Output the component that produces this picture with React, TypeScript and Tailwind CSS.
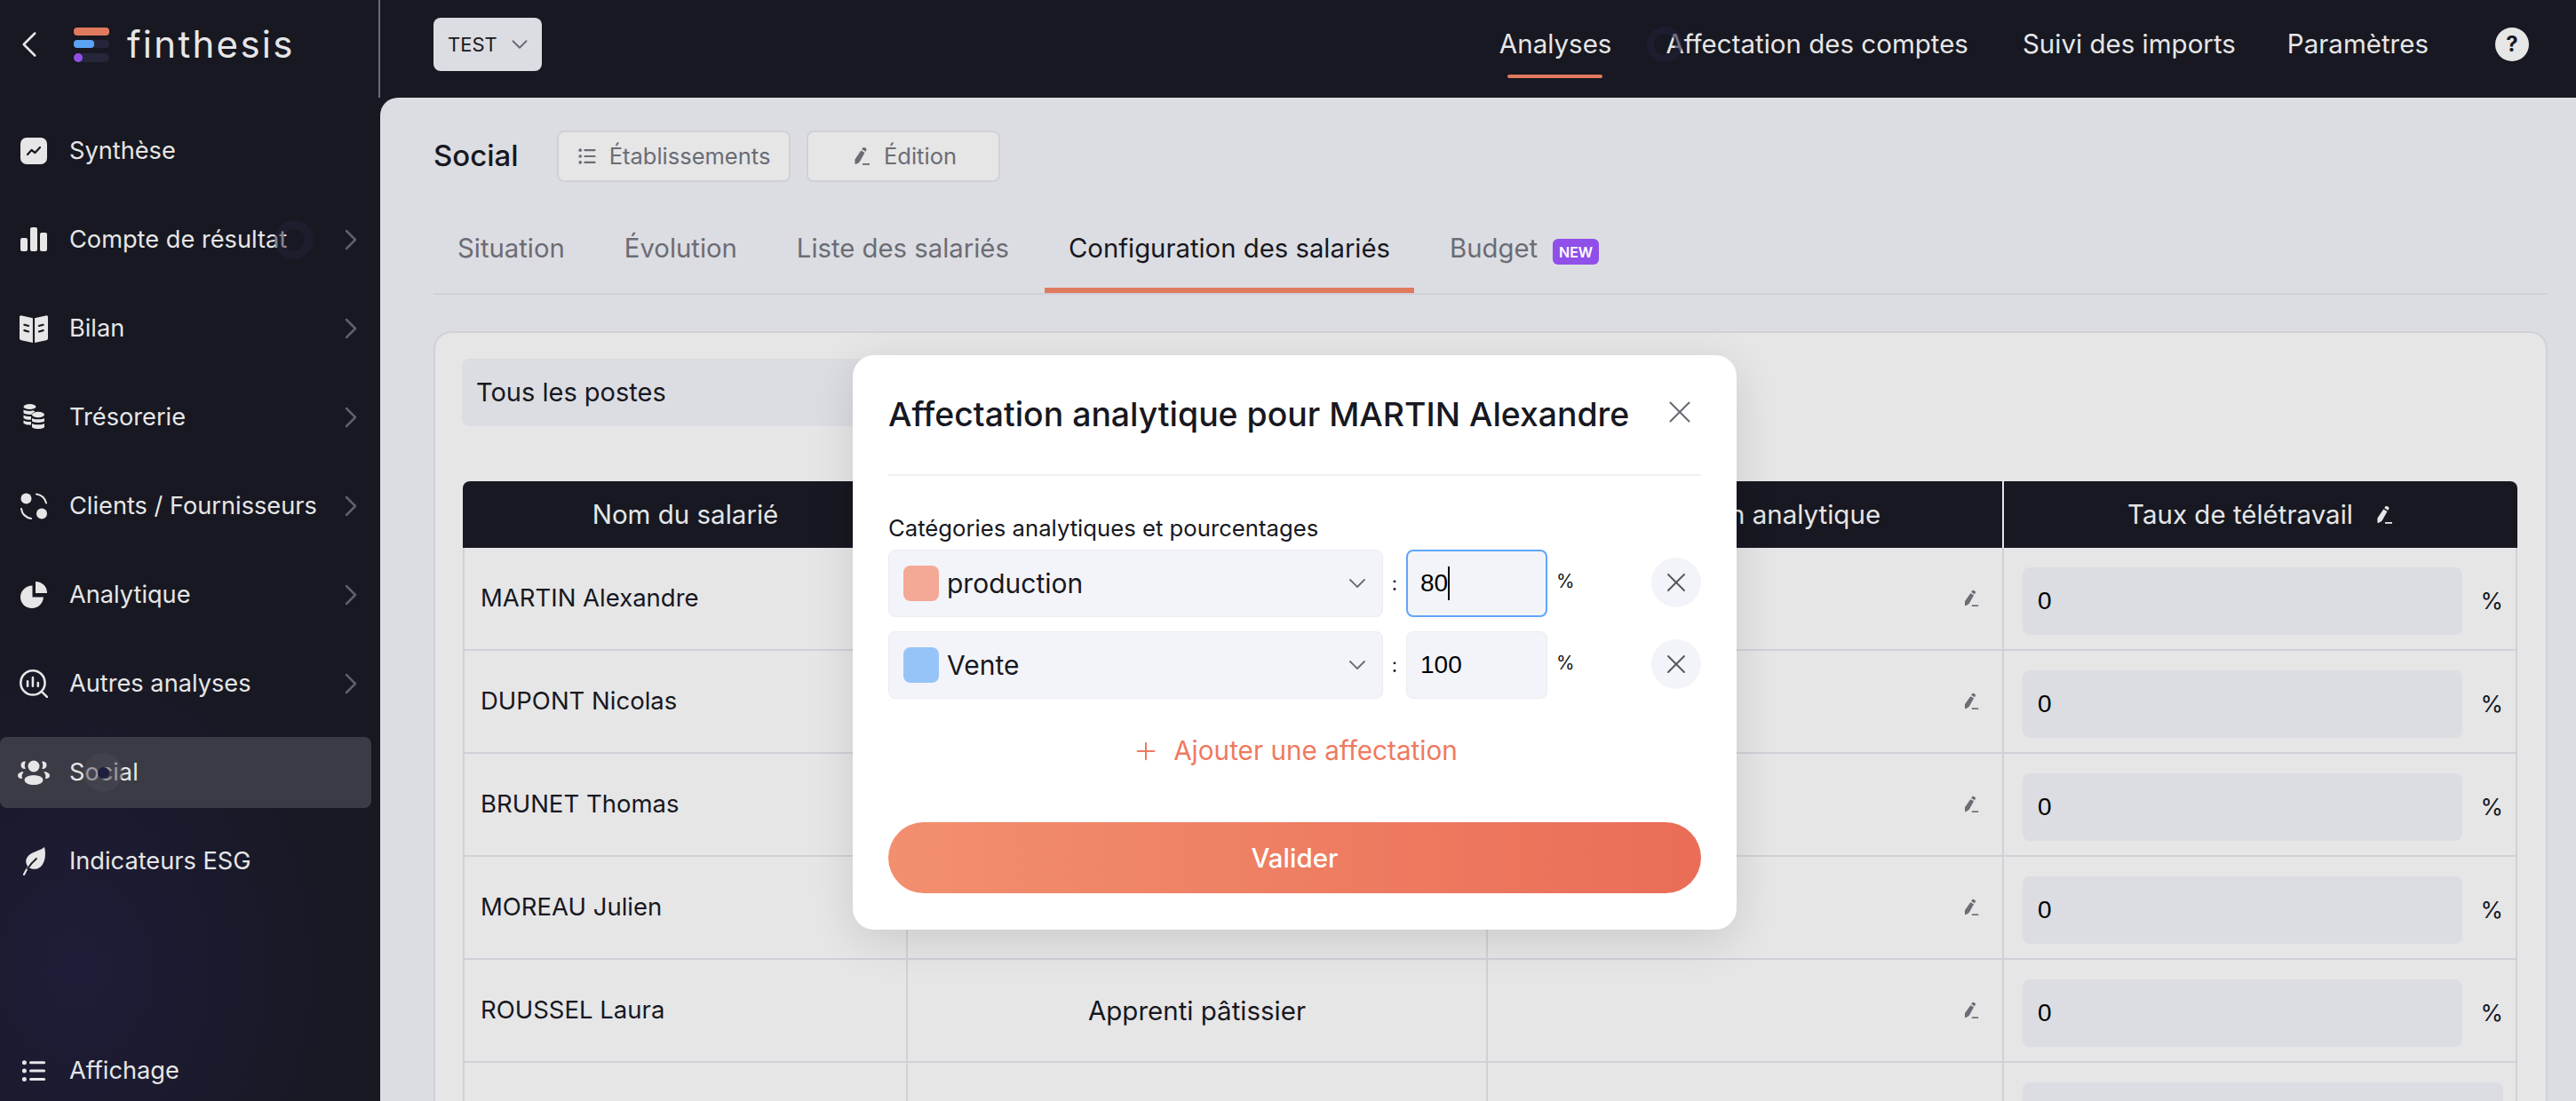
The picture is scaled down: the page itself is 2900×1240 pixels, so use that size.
import { ChevronDown, ChevronLeft, ChevronRight, Plus, X } from "lucide-react";

function Pen({ className }: { className?: string }) {
  return (
    <svg viewBox="0 0 24 24" className={className} fill="currentColor">
      <path d="M14.2 2.6c.5-.7 1.4-.9 2.1-.5l1.5.9c.7.4 1 1.3.6 2l-.9 1.7-4.2-2.4 .9-1.7zM12.3 5.6l4.2 2.4-5.6 10c-.3.5-.7.9-1.2 1.2l-3.1 1.7c-.5.3-1.1-.1-1.1-.6l-.1-3.6c0-.6.1-1.2.4-1.7l6.5-9.4z" />
      <rect x="14" y="20" width="8" height="1.8" />
    </svg>
  );
}

function ListIcon({ className }: { className?: string }) {
  return (
    <svg viewBox="0 0 24 24" className={className} fill="currentColor">
      <circle cx="3.5" cy="4.5" r="2" />
      <circle cx="3.5" cy="12" r="2" />
      <circle cx="3.5" cy="19.5" r="2" />
      <rect x="8" y="3.3" width="14.5" height="2.4" rx="1.2" />
      <rect x="8" y="10.8" width="14.5" height="2.4" rx="1.2" />
      <rect x="8" y="18.3" width="14.5" height="2.4" rx="1.2" />
    </svg>
  );
}

function SyntheseIcon() {
  return (
    <svg viewBox="0 0 30 30" className="w-[30px] h-[30px]">
      <rect x="0" y="0" width="30" height="30" rx="7" fill="#e6e6e7" />
      <path d="M8 19l4.5-5 4 3 5.5-6" fill="none" stroke="#171821" strokeWidth="2.2" strokeLinecap="round" strokeLinejoin="round" />
    </svg>
  );
}

function BarsIcon() {
  return (
    <svg viewBox="0 0 30 30" className="w-[30px] h-[30px]" fill="#e6e6e7">
      <rect x="0" y="13" width="8" height="15" rx="2" />
      <rect x="11" y="1" width="8" height="27" rx="2" />
      <rect x="22" y="7" width="8" height="21" rx="2" />
    </svg>
  );
}

function BookIcon() {
  return (
    <svg viewBox="0 0 30 30" className="w-[32px] h-[32px]">
      <path d="M0 3c0-1.300 1-2 2.300-1.700L14 4v26L2 27.500c-1.200-.3-2-1.200-2-2.400V3zM30 3c0-1.300-1-2-2.300-1.700L16 4v26l12-2.500c1.200-.3 2-1.200 2-2.400V3z" fill="#e6e6e7" />
      <path d="M5 11l4.500 1.200M5 17l4.500 1.200M25 11l-4.500 1.200M25 17l-4.500 1.200" stroke="#171821" strokeWidth="2" strokeLinecap="round" />
    </svg>
  );
}

function CoinsIcon() {
  return (
    <svg viewBox="0 0 24 30" className="w-[24px] h-[30px]" fill="#e6e6e7">
      <ellipse cx="7.500" cy="3" rx="7" ry="3" />
      <path d="M.5 6.500c1.800 1.500 8 2 11 .8l2 1.200c-2 .8-3.500 2-3.700 3.300-3 .3-7.500-.2-9.300-1.600V6.500zM.5 12.500c1.800 1.200 5.500 1.700 8.500 1.500v3.700c-3 .2-6.700-.4-8.500-1.800v-3.400zM.5 18.500c1.800 1.200 5.500 1.700 8.500 1.500v3.500c-3 .2-6.700-.4-8.500-1.800v-3.200z" />
      <ellipse cx="17" cy="12" rx="7" ry="3.200" />
      <path d="M10 16c1.800 1.700 12.200 1.700 14 0v3.500c-1.800 1.900-12.200 1.900-14 0V16zM10 22c1.800 1.700 12.200 1.700 14 0v4c-1.800 2.700-12.200 2.700-14 0v-4z" />
    </svg>
  );
}

function ClientsIcon() {
  return (
    <svg viewBox="0 0 30 30" className="w-[30px] h-[30px]">
      <circle cx="6.500" cy="6.500" r="6" fill="#e6e6e7" />
      <circle cx="24" cy="23.500" r="6" fill="#e6e6e7" />
      <path d="M18 1.500c5.500 .8 9.700 4.800 11 10M1 18c.8 5.500 5 9.800 11 11" fill="none" stroke="#e6e6e7" strokeWidth="2" strokeLinecap="round" />
    </svg>
  );
}

function PieIcon() {
  return (
    <svg viewBox="0 0 30 30" className="w-[30px] h-[30px]" fill="#e6e6e7">
      <path d="M13.500 4.500C6 4.500 0 10.500 0 17.500 0 24.500 5.800 30 13 30c7 0 12.500-5.500 13-12.500H13.500V4.500z" />
      <path d="M17 0c7.500 0 13 5.500 13 13H17V0z" />
    </svg>
  );
}

function SearchChartIcon() {
  return (
    <svg viewBox="0 0 30 30" className="w-[32px] h-[32px]" fill="none" stroke="#e6e6e7">
      <circle cx="14" cy="14" r="12.800" strokeWidth="2.400" />
      <path d="M24 24l5 5" strokeWidth="2.400" strokeLinecap="round" />
      <path d="M8.500 12.500v5M14 8.500v9M19.500 14v3.500" strokeWidth="2.400" strokeLinecap="round" />
    </svg>
  );
}

function UsersIcon() {
  return (
    <svg viewBox="0 0 36 28" className="w-[36px] h-[28px]" fill="#e6e6e7">
      <circle cx="18" cy="7" r="6.500" />
      <ellipse cx="18" cy="22.500" rx="10.500" ry="5.500" />
      <path d="M8 1.500c-3 0-4.500 2-4.500 4.200S5 10 8 10c.5 0 .8-.6.500-1C7.500 7.500 7.500 4 8.700 2.600c.3-.4 0-1.100-.7-1.100zM28 1.500c3 0 4.500 2 4.500 4.200S31 10 28 10c-.5 0-.8-.6-.5-1 1-1.500 1-5-.2-6.400-.3-.4 0-1.100 .7-1.100z" />
      <path d="M5.500 13c-3.500 .5-5.500 2.500-5.500 4.500S2 21 4.500 21c.5 0 .7-.5 .5-.9-.8-1.500-.5-3.800 1.200-5.800.4-.5 0-1.400-.7-1.300zM30.500 13c3.500 .5 5.500 2.500 5.500 4.500S34 21 31.500 21c-.5 0-.7-.5-.5-.9 .8-1.500 .5-3.800-1.200-5.800-.4-.5 0-1.400 .7-1.300z" />
    </svg>
  );
}

function LeafIcon() {
  return (
    <svg viewBox="0 0 30 32" className="w-[30px] h-[32px]">
      <path d="M27 0c2 8 1 17-4 22-4 3.500-9 3.500-13 1.500C6 20 5 15 8 11c4-6 13-6 19-11z" fill="#e6e6e7" />
      <path d="M4 31C7 24 11 19 18 13" fill="none" stroke="#e6e6e7" strokeWidth="2.200" strokeLinecap="round" />
      <path d="M8 24.500C11 19.500 14 16.500 18 13" fill="none" stroke="#171821" strokeWidth="1.800" strokeLinecap="round" />
    </svg>
  );
}

function Logo() {
  return (
    <svg viewBox="0 0 40 40" className="w-[40px] h-[40px]">
      <rect x="0" y="1" width="40" height="9" rx="4" fill="#e07a5f" />
      <rect x="0" y="15" width="40" height="9" rx="4" fill="#25263a" />
      <rect x="0" y="15" width="23" height="9" rx="4" fill="#5ba4f5" />
      <rect x="0" y="30" width="40" height="10" rx="5" fill="#25263a" />
      <rect x="0" y="30" width="10" height="10" rx="5" fill="#8f4fe8" />
    </svg>
  );
}

const menu = [
  { label: "Synthèse", icon: <SyntheseIcon /> },
  { label: "Compte de résultat", icon: <BarsIcon />, arrow: true },
  { label: "Bilan", icon: <BookIcon />, arrow: true },
  { label: "Trésorerie", icon: <CoinsIcon />, arrow: true },
  { label: "Clients / Fournisseurs", icon: <ClientsIcon />, arrow: true },
  { label: "Analytique", icon: <PieIcon />, arrow: true },
  { label: "Autres analyses", icon: <SearchChartIcon />, arrow: true },
  { label: "Social", icon: <UsersIcon />, active: true },
  { label: "Indicateurs ESG", icon: <LeafIcon /> },
];

const employees = [
  { name: "MARTIN Alexandre", job: "" },
  { name: "DUPONT Nicolas", job: "" },
  { name: "BRUNET Thomas", job: "" },
  { name: "MOREAU Julien", job: "" },
  { name: "ROUSSEL Laura", job: "Apprenti pâtissier" },
  { name: "", job: "" },
];

const assignments = [
  { label: "production", color: "bg-[#f4a896]", value: "80", focused: true },
  { label: "Vente", color: "bg-[#97c4f8]", value: "100", focused: false },
];

function Sidebar() {
  return (
    <aside className="relative w-[428px] shrink-0 h-full flex flex-col bg-[radial-gradient(ellipse_340px_420px_at_20%_88%,#1e1c38,#171821)] text-[#e6e6e7]">
      <div className="h-[110px] shrink-0 flex items-center pl-[8px] pb-[10px]">
        <ChevronLeft className="w-[50px] h-[50px] text-[#e6e6e7]" strokeWidth={1.2} />
        <div className="ml-[25px]">
          <Logo />
        </div>
        <span className="ml-[20px] text-[42px] leading-none tracking-[2.300px]">finthesis</span>
      </div>
      <nav className="flex flex-col pt-[20px]">
        {menu.map((item) => (
          <div
            key={item.label}
            className={
              item.active
                ? "relative h-[80px] mb-[20px] w-[418px] flex items-center pr-[3px] rounded-[8px] bg-[#3b3b45]"
                : "relative h-[80px] mb-[20px] w-[418px] flex items-center pr-[3px]"
            }
          >
            <span className="w-[78px] shrink-0 flex justify-center pr-[2px]">{item.icon}</span>
            <span className="text-[27.200px] leading-none">{item.label}</span>
            {item.arrow && <ChevronRight className="ml-auto w-[40px] h-[40px] text-[#5f606b]" strokeWidth={1.5} />}
          </div>
        ))}
      </nav>
      <div className="mt-auto h-[68px] flex items-center">
        <span className="w-[78px] shrink-0 flex justify-center pr-[2px]">
          <ListIcon className="w-[30px] h-[30px]" />
        </span>
        <span className="text-[27.200px] leading-none">Affichage</span>
      </div>
      <span className="absolute left-[309px] top-[248px] w-[44px] h-[44px] rounded-full border-[10px] border-[#21223a]/50" />
      <span className="absolute left-[94px] top-[848px] w-[44px] h-[44px] rounded-full bg-[#4a4a56]/50 flex items-center justify-center">
        <span className="w-[13px] h-[13px] rounded-full bg-[#1e1e3f]" />
      </span>
    </aside>
  );
}

function TopBar() {
  return (
    <header className="relative h-[110px] shrink-0 flex items-center border-l-2 border-[#6b6c75] bg-[#171821] pl-[60px] pb-[10px] -ml-[2px]">
      <div className="w-[122px] h-[60px] rounded-[8px] bg-[#dcdde2] flex items-center pl-[16px] text-[#171821]">
        <span className="text-[22px] leading-none">TEST</span>
        <ChevronDown className="ml-[10px] w-[30px] h-[30px] text-[#6b6c75]" strokeWidth={1.5} />
      </div>
      <nav className="ml-auto flex items-center text-[#e6e6e7] text-[29.500px] leading-none pr-[53px]">
        <span className="relative mr-[61px]">
          Analyses
          <span className="absolute left-[9px] right-[10px] top-[49px] h-[4px] rounded-[2px] bg-[#e07a5f]" />
        </span>
        <span className="mr-[61px]">Affectation des comptes</span>
        <span className="mr-[58px]">Suivi des imports</span>
        <span className="mr-[75px]">Paramètres</span>
        <span className="w-[38px] h-[38px] rounded-full bg-[#e6e6e7] flex items-center justify-center text-[#171821] text-[24px] font-bold">?</span>
      </nav>
      <span className="absolute left-[1426px] top-[30px] w-[40px] h-[40px] rounded-full border-[8px] border-[#21223a]/60" />
    </header>
  );
}

function Tabs() {
  const tabs = ["Situation", "Évolution", "Liste des salariés", "Configuration des salariés"];
  return (
    <div className="mt-[40px] flex gap-[13px] h-[87px] border-b-2 border-[#d0d1d8] text-[29.300px] leading-none">
      {tabs.map((tab, i) => (
        <div
          key={tab}
          className={
            i === 3
              ? "px-[27px] pt-[20px] border-b-[6px] border-[#e07a5f] text-[#171821] h-[85px]"
              : "px-[27px] pt-[20px] text-[#6b6c75]"
          }
        >
          {tab}
        </div>
      ))}
      <div className="px-[27px] pt-[20px] text-[#6b6c75] flex items-start">
        Budget
        <span className="ml-[17px] mt-[4px] w-[52px] h-[29px] rounded-[6px] bg-[#8f4fe8] text-white text-[16px] font-semibold flex items-center justify-center">NEW</span>
      </div>
    </div>
  );
}

function Table() {
  return (
    <div className="mt-[62px] ml-[1px] w-[2313px] rounded-t-[8px] overflow-hidden">
      <div className="grid grid-cols-[501px_653px_581px_578px] h-[75px] bg-[#171821] text-[#e6e6e7] text-[29.500px] items-center text-center">
        <div className="h-full flex items-center justify-center">Nom du salarié</div>
        <div className="h-full" />
        <div className="h-full flex items-center justify-center border-r-2 border-[#e6e6e7]">Affectation analytique</div>
        <div className="h-full flex items-center justify-center gap-[22px]">
          Taux de télétravail
          <Pen className="w-[24px] h-[24px]" />
        </div>
      </div>
      {employees.map((e, i) => (
        <div
          key={i}
          className="grid grid-cols-[499px_653px_581px_576px] h-[116px] border-b-2 border-l-2 border-r-2 border-[#d0d1d8] text-[#171821] text-[27.500px]"
        >
          <div className="flex items-center pl-[18px] border-r-2 border-[#d0d1d8]">{e.name}</div>
          <div className="flex items-center justify-center border-r-2 border-[#d0d1d8] text-[29.500px]">{e.job}</div>
          <div className="flex items-center justify-end pr-[25px] border-r-2 border-[#d0d1d8]">
            {e.name && <Pen className="w-[22px] h-[22px] text-[#6b6c75]" />}
          </div>
          <div className="flex items-start pt-[22px] pl-[21px] pr-[14px]">
            <div className="flex-1 h-[76px] rounded-[8px] bg-[#dcdde2] flex items-center pl-[17px] font-['Liberation_Sans',sans-serif] text-[28px] text-black">{e.name ? "0" : ""}</div>
            {e.name && <span className="ml-[20px] mt-[18px] text-[26px]">%</span>}
          </div>
        </div>
      ))}
    </div>
  );
}

function Modal() {
  return (
    <div className="absolute left-[960px] top-[400px] w-[995px] h-[647px] rounded-[24px] bg-white px-[40px] shadow-[0_12px_50px_rgba(0,0,0,0.12)] text-[#171821]">
      <div className="h-[136px] flex items-start border-b-2 border-[#eeeff4]">
        <h2 className="mt-[48px] text-[37.400px] leading-none font-medium whitespace-nowrap">Affectation analytique pour MARTIN Alexandre</h2>
        <X className="ml-auto mr-[3px] mt-[43px] w-[42px] h-[42px] text-[#6b6c75]" strokeWidth={1.2} />
      </div>
      <p className="mt-[46px] text-[25.700px] leading-[26px]">Catégories analytiques et pourcentages</p>
      <div className="mt-[11px] flex flex-col gap-[16px]">
        {assignments.map((a) => (
          <div key={a.label} className="flex items-center h-[76px]">
            <div className="w-[557px] h-full rounded-[8px] bg-[#f3f4f9] border border-[#ebecf1] flex items-center pl-[16px] pr-[12px]">
              <span className={`w-[40px] h-[40px] rounded-[8px] ${a.color}`} />
              <span className="ml-[9px] text-[30px] leading-none">{a.label}</span>
              <ChevronDown className="ml-auto w-[32px] h-[32px] text-[#6b6c75]" strokeWidth={1.4} />
            </div>
            <span className="w-[26px] text-center text-[22px]">:</span>
            <div
              className={
                a.focused
                  ? "w-[159px] h-full rounded-[8px] bg-[#f3f4f9] border-2 border-[#60a5fa] flex items-center pl-[14px] text-[28px] text-black font-['Liberation_Sans',sans-serif]"
                  : "w-[159px] h-full rounded-[8px] bg-[#f3f4f9] border border-[#ebecf1] flex items-center pl-[15px] text-[28px] text-black font-['Liberation_Sans',sans-serif]"
              }
            >
              {a.value}
              {a.focused && <span className="w-[1.500px] h-[38px] bg-black" />}
            </div>
            <span className="ml-[10px] mb-[4px] text-[21px]">%</span>
            <span className="ml-auto mb-[3px] w-[56px] h-[56px] rounded-full bg-[#f3f4f9] flex items-center justify-center">
              <X className="w-[36px] h-[36px] text-[#55565f]" strokeWidth={1.3} />
            </span>
          </div>
        ))}
      </div>
      <div className="mt-[43px] flex items-center justify-center gap-[15px] text-[#ee7a5f] text-[29.700px] leading-none">
        <Plus className="w-[32px] h-[32px]" strokeWidth={1.5} />
        Ajouter une affectation
      </div>
      <button className="mt-[64px] w-full h-[80px] rounded-full bg-gradient-to-r from-[#f28f6f] to-[#ea6d57] text-white text-[29.500px] font-medium">
        Valider
      </button>
    </div>
  );
}

export default function App() {
  return (
    <div className="relative flex w-[2900px] h-[1240px] overflow-hidden bg-[#171821] font-['Inter',sans-serif]">
      <Sidebar />
      <div className="flex-1 flex flex-col min-w-0">
        <TopBar />
        <main className="flex-1 min-h-0 overflow-hidden rounded-tl-[20px] bg-[#dcdde2] pl-[60px] pr-[32px] pt-[37px]">
          <div className="flex items-center h-[58px]">
            <h1 className="text-[33px] font-medium text-[#171821] w-[139px]">Social</h1>
            <div className="w-[263px] h-[58px] rounded-[8px] border-2 border-[#d0d1d8] bg-[#e6e6e7] flex items-center justify-center gap-[14px] text-[#6b6c75] text-[25.500px]">
              <ListIcon className="w-[22px] h-[22px]" />
              Établissements
            </div>
            <div className="ml-[18px] w-[218px] h-[58px] rounded-[8px] border-2 border-[#d0d1d8] bg-[#e6e6e7] flex items-center justify-center gap-[14px] text-[#6b6c75] text-[25.500px]">
              <Pen className="w-[24px] h-[24px]" />
              Édition
            </div>
          </div>
          <Tabs />
          <section className="mt-[41px] h-[1000px] rounded-t-[20px] border-2 border-b-0 border-[#d0d1d8] bg-[#e6e6e7] pl-[30px] pt-[29px]">
            <div className="w-[500px] h-[76px] rounded-[8px] bg-[#dcdde2] flex items-center pl-[16px] text-[29px] text-[#171821]">Tous les postes</div>
            <Table />
          </section>
        </main>
      </div>
      <Modal />
    </div>
  );
}
